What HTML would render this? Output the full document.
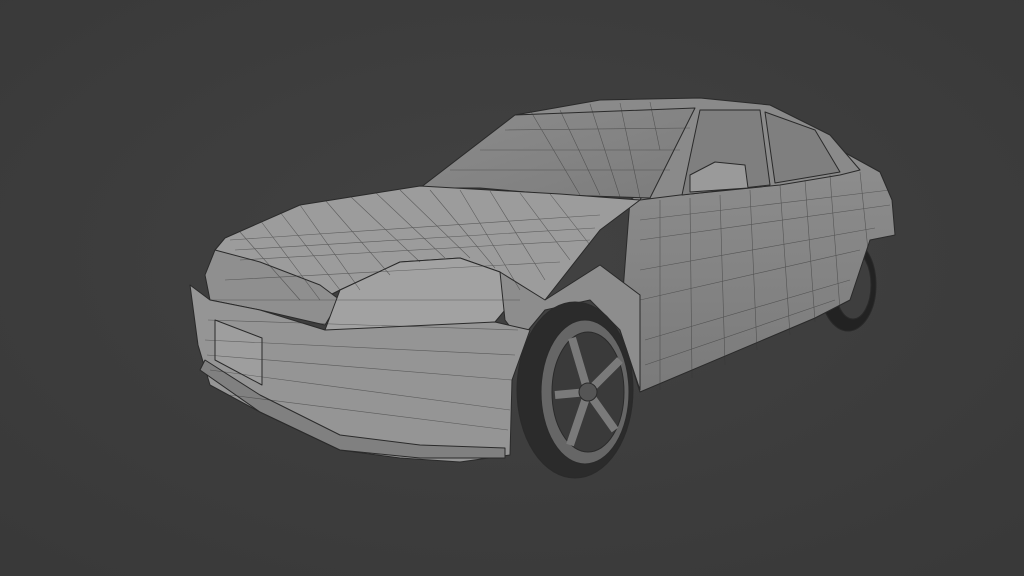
<!DOCTYPE html>
<html><head><meta charset="utf-8"><style>
html,body{margin:0;padding:0;width:1024px;height:576px;overflow:hidden;background:#3d3d3d}
svg{display:block}
</style></head><body>
<svg width="1024" height="576" viewBox="0 0 1024 576">
<defs>
<radialGradient id="bg" cx="50%" cy="45%" r="70%">
<stop offset="0" stop-color="#424242"/><stop offset="1" stop-color="#393939"/></radialGradient>
<linearGradient id="side" x1="0" y1="0" x2="0" y2="1"><stop offset="0" stop-color="#8e8e8e"/><stop offset="1" stop-color="#7a7a7a"/></linearGradient>
<linearGradient id="glass" x1="0" y1="0" x2="1" y2="1"><stop offset="0" stop-color="#8c8c8c"/><stop offset="1" stop-color="#7c7c7c"/></linearGradient>
</defs>
<rect width="1024" height="576" fill="url(#bg)"/>
<g stroke="#2a2a2a" stroke-width="1" stroke-linejoin="round">
<ellipse cx="848" cy="285" rx="28" ry="46" fill="#222"/>
<ellipse cx="853" cy="285" rx="18" ry="34" fill="#3e3e3e"/>
<path d="M630 200 L700 150 L840 150 L880 172 L892 200 L895 235 L870 240 L850 300 L815 318 L640 392 L620 330 Z" fill="url(#side)"/>
<path d="M515 115 L600 100 L700 98 L770 105 L830 135 L860 170 L840 175 L780 185 L680 195 L640 200 L690 110 Z" fill="#8a8a8a"/>
<path d="M700 110 L760 110 L770 185 L682 195 Z" fill="#7f7f7f"/>
<path d="M765 112 L815 130 L840 172 L775 183 Z" fill="#7f7f7f"/>
<path d="M420 188 L515 115 L695 108 L650 198 L560 195 L480 188 Z" fill="url(#glass)"/>
<path d="M690 175 L715 162 L745 165 L748 188 L690 192 Z" fill="#9a9a9a"/>
<path d="M225 238 L300 205 L420 186 L560 194 L640 200 L600 230 L545 300 L510 315 L500 272 L460 258 L400 262 L340 290 L320 300 L280 280 L215 250 Z" fill="#9c9c9c"/>
<path d="M215 250 L260 262 L320 285 L340 300 L325 325 L260 310 L210 300 L205 275 Z" fill="#8f8f8f"/>
<path d="M340 290 L400 262 L460 258 L500 272 L515 298 L495 322 L410 330 L325 330 Z" fill="#a2a2a2"/>
<path d="M500 272 L545 300 L600 265 L640 295 L640 390 L620 330 L590 300 L545 310 L520 340 L505 320 Z" fill="#8d8d8d"/>
<path d="M190 285 L210 300 L260 310 L325 330 L495 322 L530 330 L512 380 L510 455 L460 462 L400 458 L340 450 L260 412 L210 385 L198 345 Z" fill="#959595"/>
<path d="M215 320 L262 338 L262 385 L215 360 Z" fill="#9e9e9e"/>
<path d="M200 370 L260 412 L340 450 L420 458 L505 458 L505 448 L420 445 L340 435 L260 395 L205 360 Z" fill="#808080"/>
<ellipse cx="575" cy="390" rx="58" ry="88" fill="#2b2b2b"/>
<ellipse cx="585" cy="392" rx="44" ry="72" fill="#666"/>
<ellipse cx="588" cy="392" rx="36" ry="60" fill="#3a3a3a"/>
<path d="M588 392 L572 338 M588 392 L620 360 M588 392 L615 430 M588 392 L570 445 M588 392 L555 395" stroke="#7a7a7a" stroke-width="8" fill="none"/>
<circle cx="588" cy="392" r="9" fill="#555"/>
</g>
<g stroke="#333" stroke-width="0.6" fill="none" opacity="0.6">
<path d="M240 232 L300 300 M260 220 L320 300 M280 212 L340 290 M300 205 L360 290 M325 200 L390 275 M350 196 L420 262 M375 192 L445 258 M400 190 L470 258 M430 190 L495 268 M460 190 L520 290 M490 191 L545 280 M520 193 L570 260 M550 194 L590 245"/>
<path d="M230 240 L600 215 M235 250 L595 228 M240 260 L590 240 M225 280 L560 262 M210 300 L520 300 M208 320 L518 330 M205 340 L515 355 M207 355 L512 380 M210 370 L510 410 M230 395 L508 430"/>
<path d="M660 200 L660 390 M690 198 L692 378 M720 195 L725 365 M750 190 L757 350 M780 185 L790 335 M805 180 L815 322 M830 175 L840 310 M860 172 L868 250"/>
<path d="M640 220 L890 190 M640 240 L890 205 M640 270 L875 228 M640 300 L860 250 M645 340 L850 280 M645 365 L835 300"/>
<path d="M530 110 L580 195 M560 110 L600 195 M590 104 L620 197 M620 103 L640 198 M650 102 L660 150 M450 170 L670 170 M480 150 L680 150 M505 130 L690 128"/>
</g>
</svg>
</body></html>
